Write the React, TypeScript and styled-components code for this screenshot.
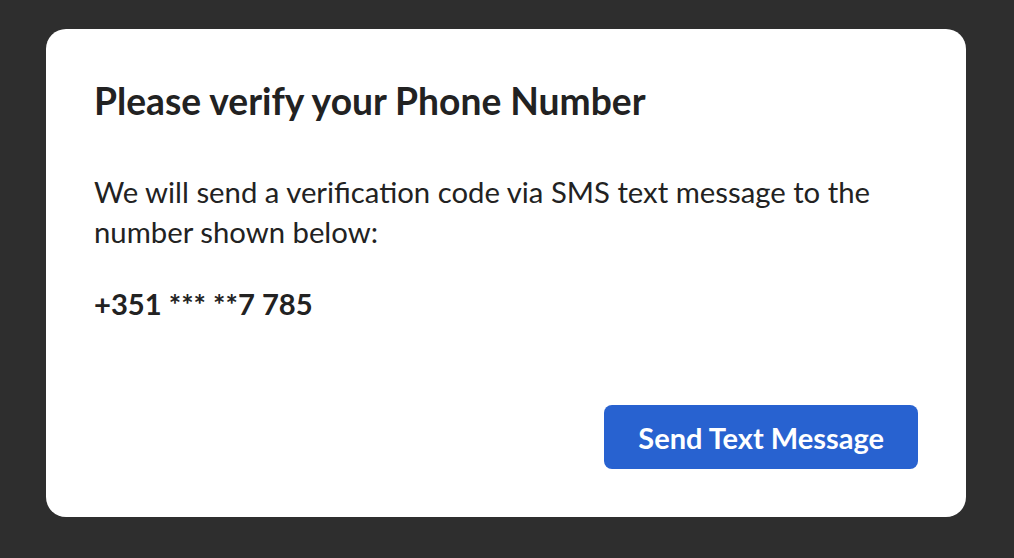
import React from "react";
import styled, { createGlobalStyle } from "styled-components";

const GlobalStyle = createGlobalStyle`
  html, body {
    margin: 0;
    padding: 0;
    background: #2e2e2e;
    font-family: Lato, "Liberation Sans", sans-serif;
  }
`;

const Page = styled.div`
  width: 1014px;
  height: 558px;
  box-sizing: border-box;
  padding: 29px 48px 41px 46px;
  display: flex;
`;

const Card = styled.div`
  flex: 1;
  background: #ffffff;
  border-radius: 20px;
  box-sizing: border-box;
  padding: 50px 48px 48px 48px;
  display: flex;
  flex-direction: column;
  color: #222222;
`;

const Title = styled.h1`
  margin: 0;
  font-size: 37.2px;
  line-height: 44px;
  font-weight: 700;
`;

const Body = styled.p`
  margin: 49px 0 0;
  font-size: 29.3px;
  line-height: 40px;
  font-weight: 400;
`;

const Phone = styled.div`
  margin-top: 32px;
  font-size: 29.2px;
  line-height: 40px;
  font-weight: 700;
`;

const Footer = styled.div`
  margin-top: auto;
  display: flex;
  justify-content: flex-end;
`;

const Button = styled.button`
  height: 64px;
  padding: 0 34px;
  border: none;
  border-radius: 8px;
  background: #2862d0;
  color: #ffffff;
  font-family: Lato, "Liberation Sans", sans-serif;
  font-size: 29px;
  font-weight: 700;
  cursor: pointer;
`;

export default function App() {
  return (
    <>
      <GlobalStyle />
      <Page>
        <Card>
          <Title>Please verify your Phone Number</Title>
          <Body>
            We will send a verification code via SMS text message to the
            <br />
            number shown below:
          </Body>
          <Phone>+351 *** **7 785</Phone>
          <Footer>
            <Button>Send Text Message</Button>
          </Footer>
        </Card>
      </Page>
    </>
  );
}
